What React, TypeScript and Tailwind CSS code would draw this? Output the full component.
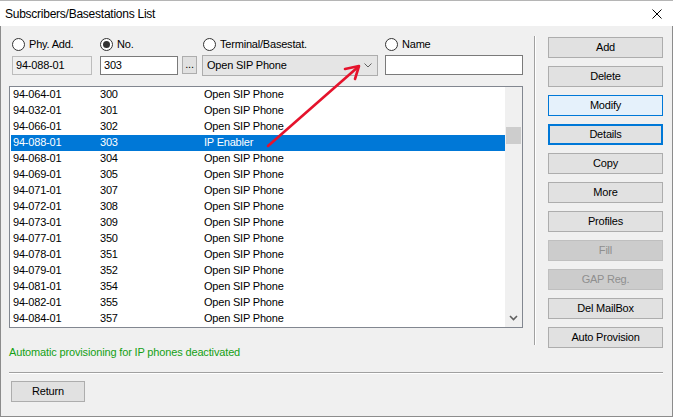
import React from 'react';

type Row = { phy: string; no: string; term: string };

const rows: Row[] = [
  { phy: '94-064-01', no: '300', term: 'Open SIP Phone' },
  { phy: '94-032-01', no: '301', term: 'Open SIP Phone' },
  { phy: '94-066-01', no: '302', term: 'Open SIP Phone' },
  { phy: '94-088-01', no: '303', term: 'IP Enabler' },
  { phy: '94-068-01', no: '304', term: 'Open SIP Phone' },
  { phy: '94-069-01', no: '305', term: 'Open SIP Phone' },
  { phy: '94-071-01', no: '307', term: 'Open SIP Phone' },
  { phy: '94-072-01', no: '308', term: 'Open SIP Phone' },
  { phy: '94-073-01', no: '309', term: 'Open SIP Phone' },
  { phy: '94-077-01', no: '350', term: 'Open SIP Phone' },
  { phy: '94-078-01', no: '351', term: 'Open SIP Phone' },
  { phy: '94-079-01', no: '352', term: 'Open SIP Phone' },
  { phy: '94-081-01', no: '354', term: 'Open SIP Phone' },
  { phy: '94-082-01', no: '355', term: 'Open SIP Phone' },
  { phy: '94-084-01', no: '357', term: 'Open SIP Phone' },
];

const selected = 3;

const Radio: React.FC<{ label: string; checked?: boolean; className?: string }> = ({ label, checked, className }) => (
  <label className={`flex items-center gap-[4px] ${className ?? ''}`}>
    <span className="w-[13px] h-[13px] rounded-full border border-[#333] bg-white flex items-center justify-center shrink-0">
      {checked && <span className="w-[7px] h-[7px] rounded-full bg-[#333]" />}
    </span>
    <span>{label}</span>
  </label>
);

type Variant = 'normal' | 'hover' | 'focus' | 'disabled';

const DlgButton: React.FC<{ label: string; variant?: Variant }> = ({ label, variant = 'normal' }) => {
  const styles: Record<Variant, string> = {
    normal: 'bg-[#e1e1e1] border border-[#adadad] text-black',
    hover: 'bg-[#e5f1fb] border border-[#0078d7] text-black',
    focus: 'bg-[#e1e1e1] border-2 border-[#0078d7] text-black',
    disabled: 'bg-[#cccccc] border border-[#bfbfbf] text-[#8f8f8f]',
  };
  return (
    <button className={`w-[115px] h-[21px] flex items-center justify-center leading-none ${styles[variant]}`}>
      {label}
    </button>
  );
};

export default function App() {
  return (
    <div className="relative w-[673px] h-[417px] flex flex-col font-['Liberation_Sans',Arial,sans-serif] text-[11px] tracking-[-0.2px] text-black select-none">
      {/* title bar */}
      <div className="h-[26px] bg-white flex items-center justify-between pl-[5px] pr-[11px] border-t border-[#b5b5b5]">
        <span className="text-[12px] tracking-[-0.25px]">Subscribers/Basestations List</span>
        <svg width="10" height="10" viewBox="0 0 10 10" className="mt-[1px]">
          <path d="M0.5 0.5 L9.5 9.5 M9.5 0.5 L0.5 9.5" stroke="#000" strokeWidth="1" />
        </svg>
      </div>

      {/* body */}
      <div className="flex-1 bg-[#f0f0f0] border-x border-b border-[#8c8c8c] flex flex-col">
        <div className="flex items-start">
          {/* left column */}
          <div className="ml-[8px] mt-[11px] w-[514px] flex flex-col">
            <div className="h-[14px] flex items-center pl-[3px]">
              <Radio label="Phy. Add." className="w-[88px]" />
              <Radio label="No." checked className="w-[103px]" />
              <Radio label="Terminal/Basestat." className="w-[182px]" />
              <Radio label="Name" />
            </div>

            <div className="mt-[4px] h-[21px] flex items-start pl-[3px]">
              <div className="mt-[1px] w-[80px] h-[19px] bg-[#f0f0f0] border border-[#bcbcbc] flex items-center pl-[3px]">
                94-088-01
              </div>
              <div className="mt-[1px] ml-[8px] w-[78px] h-[19px] bg-white border border-[#7a7a7a] flex items-center pl-[3px]">
                303
              </div>
              <button className="mt-[1px] ml-[4px] w-[15px] h-[18px] bg-[#e1e1e1] border border-[#adadad] flex items-end justify-center pb-[3px] leading-none">
                ...
              </button>
              <div className="ml-[5px] w-[176px] h-[21px] bg-[#e5e5e5] border border-[#adadad] flex items-center justify-between pl-[4px] pr-[5px]">
                <span>Open SIP Phone</span>
                <svg width="8" height="5" viewBox="0 0 8 5">
                  <path d="M0.5 0.5 L4 4 L7.5 0.5" stroke="#606060" strokeWidth="1" fill="none" />
                </svg>
              </div>
              <div className="ml-[7px] w-[138px] h-[20px] bg-white border border-[#7a7a7a]" />
            </div>

            {/* list */}
            <div className="mt-[10px] h-[242px] bg-white border border-[#828790] flex">
              <div className="flex-1 pl-[1px] pt-[0px]">
                {rows.map((r, i) => (
                  <div
                    key={r.phy}
                    className={`h-[16px] leading-[14px] flex pl-[2px] ${i === selected ? 'bg-[#0078d7] text-white' : ''}`}
                  >
                    <span className="w-[87px]">{r.phy}</span>
                    <span className="w-[104px]">{r.no}</span>
                    <span>{r.term}</span>
                  </div>
                ))}
              </div>
              <div className="w-[17px] bg-[#f0f0f0] flex flex-col items-center">
                <div className="mt-[40px] w-[15px] h-[17px] bg-[#cdcdcd]" />
                <div className="flex-1" />
                <svg width="9" height="6" viewBox="0 0 9 6" className="mb-[6px]">
                  <path d="M1 1 L4.5 4.5 L8 1" stroke="#606060" strokeWidth="1.6" fill="none" />
                </svg>
              </div>
            </div>

            <div className="mt-[18px] leading-[13px] text-[#14a014] tracking-[-0.15px]">
              Automatic provisioning for IP phones deactivated
            </div>
          </div>

          {/* etched separator */}
          <div className="ml-[11px] mt-[10px] h-[309px] flex">
            <div className="w-px bg-[#a0a0a0]" />
            <div className="w-px bg-white" />
          </div>

          {/* right buttons */}
          <div className="ml-[12px] mt-[11px] flex flex-col gap-[8px]">
            <DlgButton label="Add" />
            <DlgButton label="Delete" />
            <DlgButton label="Modify" variant="hover" />
            <DlgButton label="Details" variant="focus" />
            <DlgButton label="Copy" />
            <DlgButton label="More" />
            <DlgButton label="Profiles" />
            <DlgButton label="Fill" variant="disabled" />
            <DlgButton label="GAP Reg." variant="disabled" />
            <DlgButton label="Del MailBox" />
            <DlgButton label="Auto Provision" />
          </div>
        </div>

        {/* bottom separator */}
        <div className="mt-[13px] ml-[8px] w-[654px] flex flex-col">
          <div className="h-px bg-[#a0a0a0]" />
          <div className="h-px bg-white" />
        </div>

        <button className="mt-[7px] ml-[10px] w-[74px] h-[21px] bg-[#e1e1e1] border border-[#adadad] flex items-center justify-center leading-none">
          Return
        </button>
      </div>

      {/* red annotation arrow */}
      <svg className="absolute inset-0 pointer-events-none" width="673" height="417" viewBox="0 0 673 417">
        <g stroke="#e5132c" strokeWidth="2.6" strokeLinecap="round" fill="none">
          <path d="M268 146 L358 67" />
          <path d="M345 69 L359 66 L355 79" strokeLinejoin="round" />
        </g>
      </svg>
    </div>
  );
}
